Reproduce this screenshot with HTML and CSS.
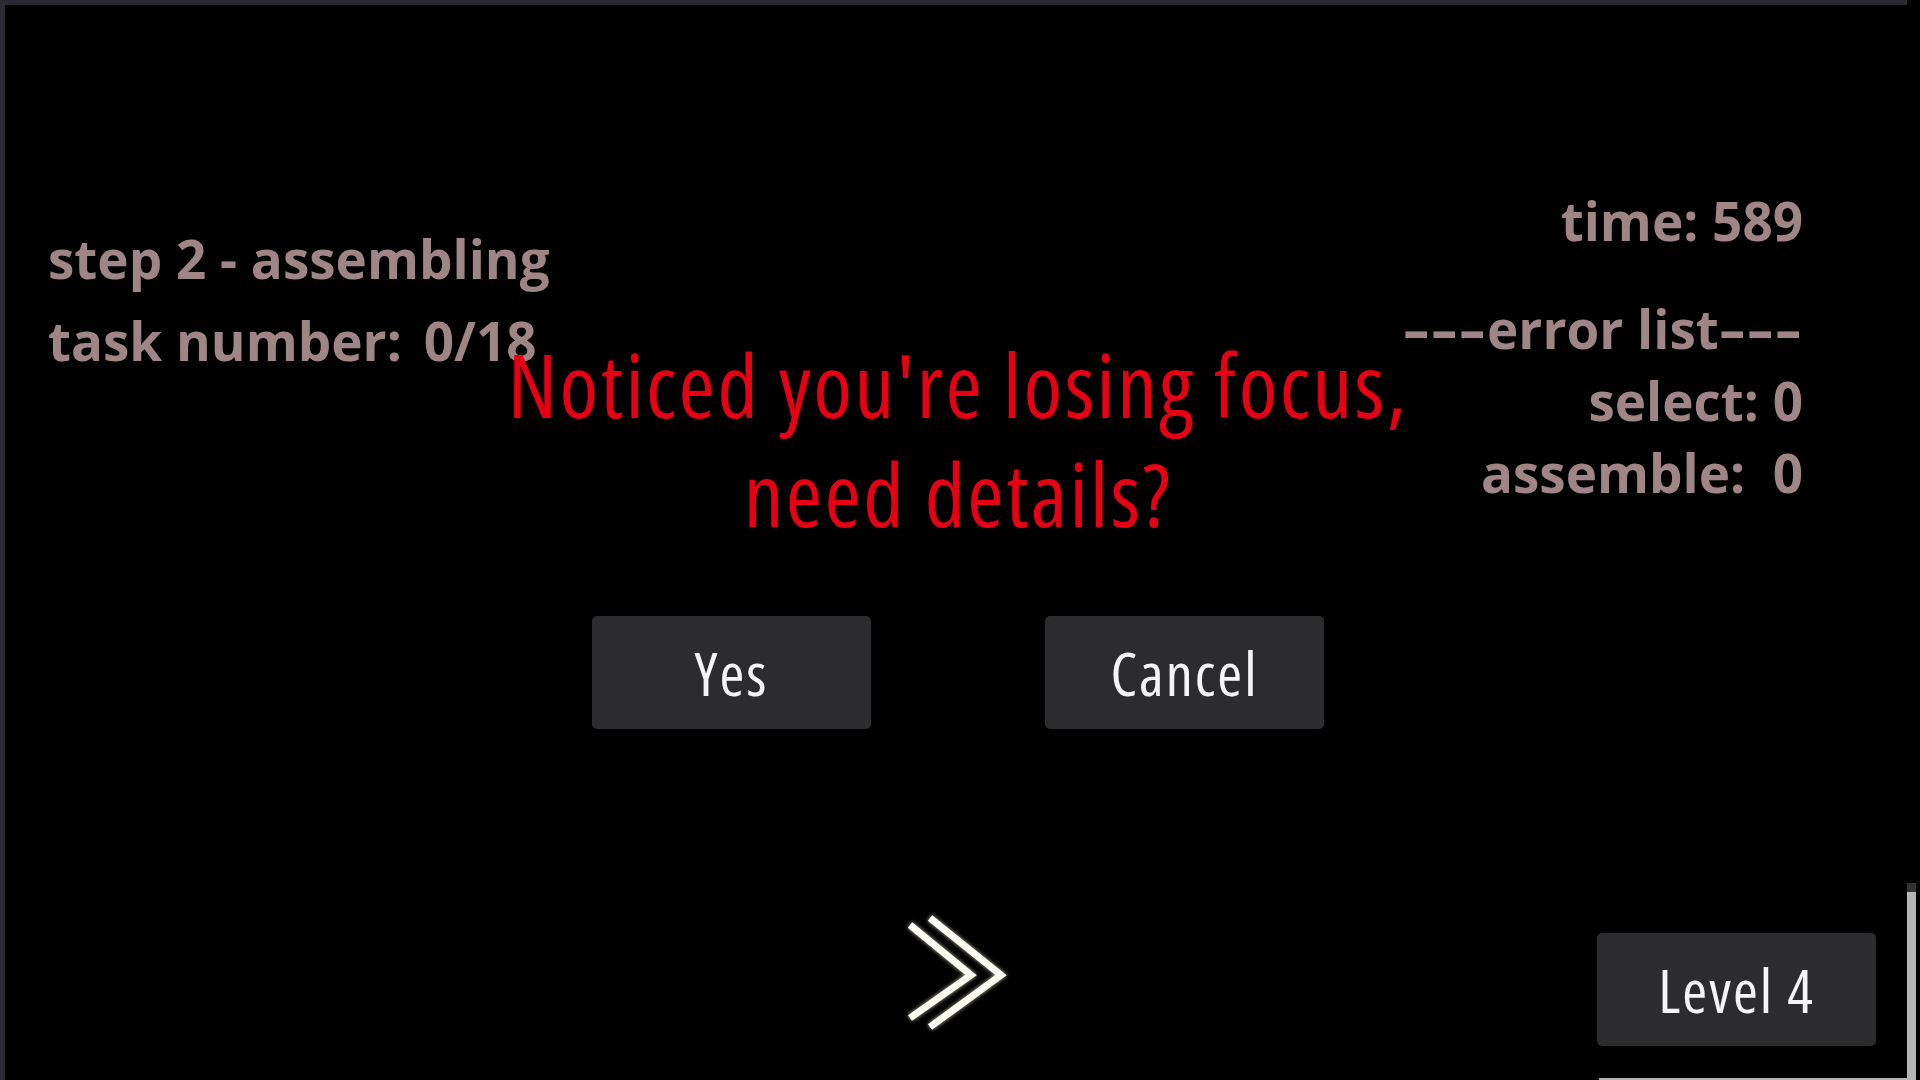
FILE: index.html
```html
<!DOCTYPE html>
<html lang="en">
<head>
<meta charset="utf-8">
<title>Assembly task</title>
<link rel="stylesheet" href="styles.css">
</head>
<body>
<div class="screen">
  <main class="stage">
    <header class="hud">
      <section class="hud-left">
        <div class="hud-line">step 2 - assembling</div>
        <div class="hud-line">task number:<span class="gap"> </span>0/18</div>
      </section>
      <section class="hud-right">
        <div class="hud-line">time: 589</div>
        <div class="hud-line errors-title"><span class="dash">---</span>error list<span class="dash">---</span></div>
        <div class="hud-line">select: 0</div>
        <div class="hud-line">assemble:&nbsp; 0</div>
      </section>
    </header>

    <div class="dialog">
      <h1 class="dialog-title">Noticed you're losing focus,<br>need details?</h1>
      <div class="dialog-actions">
        <button class="btn">Yes</button>
        <button class="btn">Cancel</button>
      </div>
    </div>

    <footer class="footer">
      <div class="footer-side"></div>
      <div class="footer-center">
        <svg class="next-icon" width="106" height="120" viewBox="0 0 106 120">
          <polyline points="7,13 68,63 7,106" />
          <polyline points="27,6 98,63 27,115" />
        </svg>
      </div>
      <div class="footer-side footer-right">
        <button class="btn level-btn">Level 4</button>
        <div class="footer-rule"></div>
      </div>
    </footer>
  </main>
  <aside class="edge">
    <div class="edge-space"></div>
    <div class="scrollbar"><div class="scrollbar-cap"></div></div>
  </aside>
</div>
</body>
</html>
```
FILE: styles.css
```css
html, body {
  margin: 0;
  padding: 0;
  background: #000;
}

.screen {
  width: 1920px;
  height: 1080px;
  display: flex;
  background: #000;
  overflow: hidden;
}

.stage {
  position: relative;
  width: 1907px;
  height: 1080px;
  box-sizing: border-box;
  border-top: 5px solid #2a2a32;
  border-left: 5px solid #2a2a32;
  display: flex;
  flex-direction: column;
}

/* HUD */
.hud {
  display: flex;
  justify-content: space-between;
  align-items: flex-start;
  padding: 0 104px 0 43px;
  font-family: "Open Sans", sans-serif;
  font-weight: 700;
  font-stretch: 100%;
  font-size: 53px;
  color: #a08587;
}

.hud-line {
  white-space: pre;
}

.gap {
  display: inline-block;
  width: 22px;
}

.dash {
  display: inline-block;
  letter-spacing: 1px;
  transform: scaleX(1.55);
  transform-origin: left center;
  margin-right: 30px;
}

.hud-left {
  margin-top: 213px;
  line-height: 82px;
}

.hud-right {
  margin-top: 180px;
  line-height: 72px;
  text-align: right;
}

.errors-title {
  margin-top: 36px;
}

/* Dialog */
.dialog {
  position: absolute;
  top: 325px;
  left: 4px;
  right: 0;
  display: flex;
  flex-direction: column;
  align-items: center;
}

.dialog-title {
  margin: 0;
  font-family: "Open Sans", sans-serif;
  font-weight: 500;
  font-stretch: 75%;
  font-size: 88px;
  line-height: 109px;
  letter-spacing: 2.4px;
  color: #e60014;
  text-align: center;
}

.dialog-actions {
  margin-top: 68px;
  display: flex;
  gap: 174px;
}

.btn {
  width: 279px;
  height: 113px;
  border: none;
  border-radius: 5px;
  background: #2c2c2f;
  color: #f5f5f5;
  font-family: "Open Sans", sans-serif;
  font-weight: 400;
  font-stretch: 75%;
  font-size: 60px;
  letter-spacing: 2px;
  padding: 0;
  display: flex;
  align-items: center;
  justify-content: center;
}

/* Footer */
.footer {
  margin-top: auto;
  display: grid;
  grid-template-columns: 1fr auto 1fr;
  align-items: start;
}

.next-icon {
  display: block;
  filter: drop-shadow(0 0 2px rgba(255, 255, 240, 0.7));
}

.next-icon polyline {
  fill: none;
  stroke: #fbfbf4;
  stroke-width: 7;
  stroke-linejoin: miter;
  stroke-linecap: butt;
}

.footer-right {
  display: flex;
  flex-direction: column;
  align-items: flex-end;
  padding-top: 21px;
}

.level-btn {
  margin-right: 31px;
}

.footer-rule {
  margin-top: 32px;
  width: 308px;
  height: 2px;
  background: #b3b3b3;
}

/* Right edge */
.edge {
  width: 13px;
  display: flex;
  flex-direction: column;
}

.edge-space {
  height: 883px;
}

.scrollbar {
  width: 9px;
  flex: 1;
  background: #b5b5b5;
}

.scrollbar-cap {
  height: 9px;
  background: #333336;
}
```
